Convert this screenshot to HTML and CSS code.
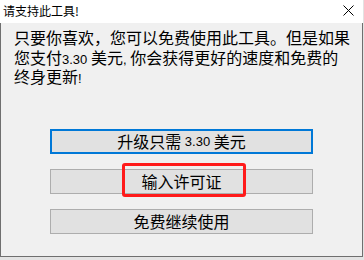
FILE: index.html
```html
<!DOCTYPE html>
<html lang="zh-CN">
<head>
<meta charset="utf-8">
<title>请支持此工具!</title>
<link rel="stylesheet" href="styles.css">
</head>
<body>
<div class="window">
  <div class="titlebar">
    <span class="title">请支持此工具!</span>
    <svg class="close" width="11" height="11" viewBox="0 0 11 11"><path d="M0.5 0.5 L10.5 10.5 M10.5 0.5 L0.5 10.5" stroke="#000" stroke-width="1" fill="none"/></svg>
  </div>
  <div class="client">
    <div class="message">
      <div class="line">只要你喜欢，您可以免费使用此工具。但是如果</div>
      <div class="line">您支付<span class="latin">3.30</span> 美元<span class="latin">,</span> 你会获得更好的速度和免费的</div>
      <div class="line">终身更新<span class="latin">!</span></div>
    </div>
    <div class="buttons">
      <button class="btn btn-default">升级只需 <span class="latin">3.30</span> 美元</button>
      <button class="btn">输入许可证</button>
      <button class="btn">免费继续使用</button>
    </div>
    <div class="highlight"></div>
  </div>
</div>
</body>
</html>
```
FILE: styles.css
```css
* { box-sizing: border-box; }
html, body {
  margin: 0;
  padding: 0;
  width: 364px;
  height: 260px;
  background: #e3e3e3;
  overflow: hidden;
}
body {
  font-family: "Noto Sans CJK SC", "Noto Sans", sans-serif;
  color: #000;
}
.window {
  width: 363px;
  height: 257px;
  border: 1px solid #6f6f6f;
  border-top: none;
  background: #f0f0f0;
  display: flex;
  flex-direction: column;
}
.titlebar {
  height: 23px;
  flex: none;
  background: #fff;
  display: flex;
  align-items: center;
  justify-content: space-between;
  padding: 0 9px 0 3px;
  margin: 0 -1px;
}
.title {
  font-size: 12px;
  line-height: 14px;
  margin-top: -1px;
}
.close {
  display: block;
  margin-top: -2px;
}
.client {
  position: relative;
  flex: 1;
  padding: 5px 0 0 13px;
}
.message {
  font-size: 16px;
}
.line {
  height: 19.5px;
  line-height: 19.5px;
  white-space: nowrap;
}
.latin {
  font-family: "Liberation Sans", Arial, sans-serif;
  font-size: 13px;
  line-height: 1;
}
.buttons {
  display: flex;
  flex-direction: column;
  gap: 15px;
  margin: 42.5px 0 0 36px;
}
.btn {
  width: 263px;
  height: 25px;
  padding: 0 0 1px;
  margin: 0;
  background: #e1e1e1;
  border: 1px solid #adadad;
  font-family: "Noto Sans CJK SC", "Noto Sans", sans-serif;
  font-size: 16px;
  line-height: 1;
  color: #000;
  display: flex;
  align-items: center;
  justify-content: center;
  gap: 0;
  white-space: pre;
}
.btn-default {
  border: 2px solid #0078d7;
}
.highlight {
  position: absolute;
  left: 121px;
  top: 140px;
  width: 124px;
  height: 34px;
  border: 3px solid #ff1a1a;
  border-radius: 3px;
}
```
